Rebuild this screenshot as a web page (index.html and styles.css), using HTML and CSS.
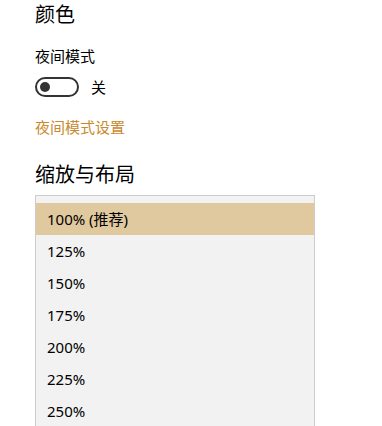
FILE: index.html
```html
<!DOCTYPE html>
<html lang="zh-CN">
<head>
<meta charset="utf-8">
<link rel="stylesheet" href="styles.css">
</head>
<body>
<div class="page">
  <h2 class="heading">颜色</h2>
  <div class="label">夜间模式</div>
  <div class="toggle-row">
    <span class="toggle"><span class="knob"></span></span>
    <span class="toggle-text">关</span>
  </div>
  <a class="link">夜间模式设置</a>
  <h2 class="heading heading-2">缩放与布局</h2>
  <div class="list">
    <div class="item selected">100% (推荐)</div>
    <div class="item">125%</div>
    <div class="item">150%</div>
    <div class="item">175%</div>
    <div class="item">200%</div>
    <div class="item">225%</div>
    <div class="item">250%</div>
  </div>
</div>
</body>
</html>
```
FILE: styles.css
```css
html, body {
  margin: 0;
  padding: 0;
  background: #ffffff;
  overflow: hidden;
}
body {
  font-family: "Noto Sans", "Noto Sans CJK SC", sans-serif;
  color: #000000;
}
.page {
  padding-left: 35px;
  display: flex;
  flex-direction: column;
  align-items: flex-start;
}
.heading {
  margin: 0;
  font-size: 20px;
  line-height: 28px;
  font-weight: 400;
  font-family: "Noto Sans CJK SC", sans-serif;
}
.label {
  margin-top: 18px;
  font-size: 15px;
  line-height: 20px;
  font-family: "Noto Sans CJK SC", sans-serif;
}
.toggle-row {
  margin-top: 11px;
  display: flex;
  align-items: center;
  height: 20px;
}
.toggle {
  box-sizing: border-box;
  width: 44px;
  height: 20px;
  border: 2px solid #333333;
  border-radius: 10px;
  display: flex;
  align-items: center;
  padding-left: 3px;
}
.knob {
  width: 10px;
  height: 10px;
  border-radius: 50%;
  background: #333333;
}
.toggle-text {
  margin-left: 12px;
  font-size: 15px;
  font-family: "Noto Sans CJK SC", sans-serif;
  line-height: 20px;
}
.link {
  margin-top: 20px;
  font-size: 15px;
  line-height: 20px;
  color: #c98a30;
  font-family: "Noto Sans CJK SC", sans-serif;
}
.heading-2 {
  margin-top: 23px;
}
.list {
  margin-top: 7px;
  box-sizing: border-box;
  width: 280px;
  border: 1px solid #cccccc;
  border-bottom: none;
  background: #f2f2f2;
  padding-top: 7px;
}
.item {
  height: 32px;
  line-height: 32px;
  padding-left: 11px;
  font-size: 15px;
}
.item.selected {
  background: #e0c89f;
}
```
